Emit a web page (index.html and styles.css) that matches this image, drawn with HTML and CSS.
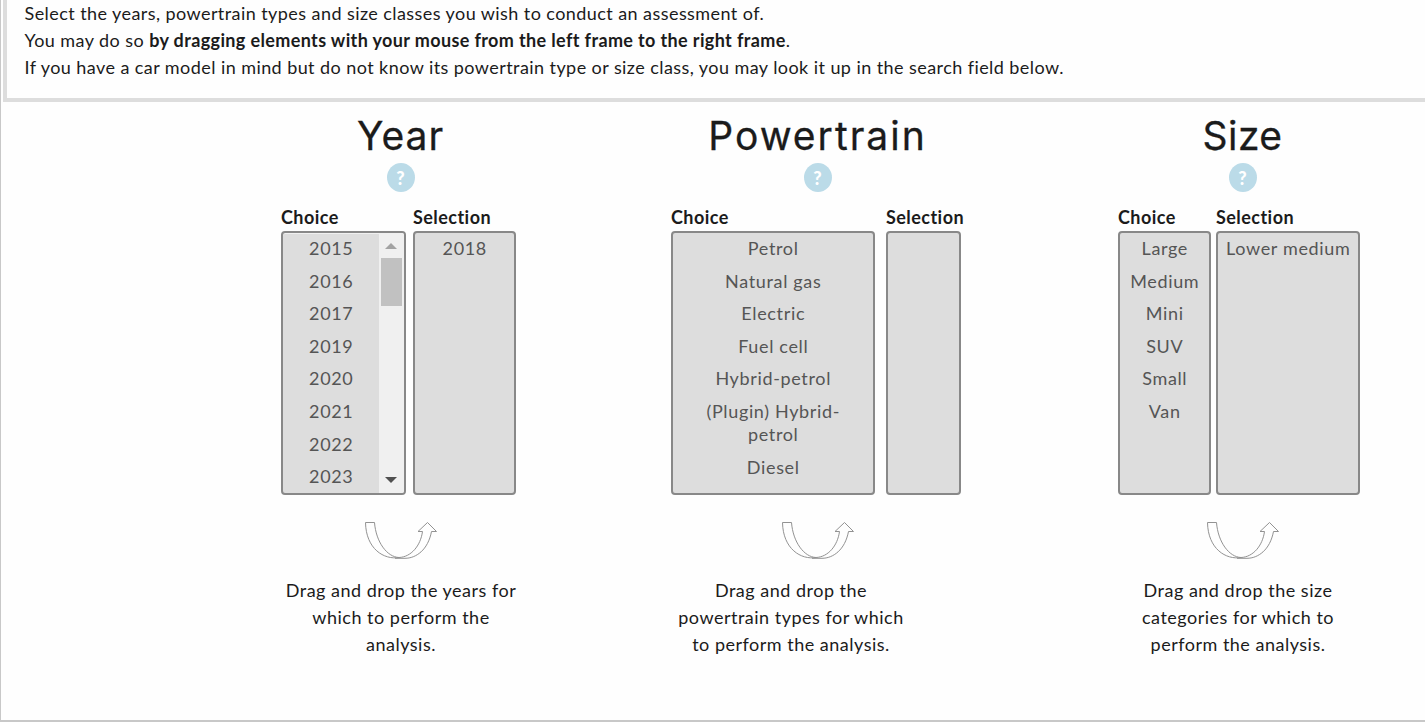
FILE: index.html
```html
<!DOCTYPE html>
<html lang="en">
<head>
<meta charset="utf-8">
<title>Selection</title>
<link rel="stylesheet" href="styles.css">
</head>
<body>
<svg class="defs" width="0" height="0"><defs>
<symbol id="arrow" viewBox="0 0 74 40"><path d="M1.500 3.500H10.500C12 23 23 38 35 38.500C20 41 2 30 1.500 3.500ZM35 38.500C47 38 56.500 27 58.500 12.500H54L63.500 3.500L72.500 12.500H67.500C64 31 52 39.300 41 39.300H31" fill="none" stroke="#929292" stroke-width="1"/></symbol>
</defs></svg>
<main class="page">
<section class="intro">
<p>Select the years, powertrain types and size classes you wish to conduct an assessment of.</p>
<p>You may do so <b>by dragging elements with your mouse from the left frame to the right frame</b>.</p>
<p>If you have a car model in mind but do not know its powertrain type or size class, you may look it up in the search field below.</p>
</section>
<div class="columns">
<section class="column year">
<h2>Year</h2><span class="help">?</span>
<div class="lists">
<div class="choice"><h3>Choice</h3><div class="box scrolling"><ul><li>2015</li><li>2016</li><li>2017</li><li>2019</li><li>2020</li><li>2021</li><li>2022</li><li>2023</li></ul><div class="scrollbar"><i class="up"></i><i class="thumb"></i><i class="down"></i></div></div></div>
<div class="selection"><h3>Selection</h3><div class="box"><ul><li>2018</li></ul></div></div>
</div>
<svg class="arrow"><use href="#arrow"/></svg>
<p class="hint">Drag and drop the years for<br>which to perform the<br>analysis.</p>
</section>
<section class="column powertrain">
<h2>Powertrain</h2><span class="help">?</span>
<div class="lists">
<div class="choice"><h3>Choice</h3><div class="box"><ul><li>Petrol</li><li>Natural gas</li><li>Electric</li><li>Fuel cell</li><li>Hybrid-petrol</li><li>(Plugin) Hybrid-<br>petrol</li><li>Diesel</li></ul></div></div>
<div class="selection"><h3>Selection</h3><div class="box"></div></div>
</div>
<svg class="arrow"><use href="#arrow"/></svg>
<p class="hint">Drag and drop the<br>powertrain types for which<br>to perform the analysis.</p>
</section>
<section class="column size">
<h2>Size</h2><span class="help">?</span>
<div class="lists">
<div class="choice"><h3>Choice</h3><div class="box"><ul><li>Large</li><li>Medium</li><li>Mini</li><li>SUV</li><li>Small</li><li>Van</li></ul></div></div>
<div class="selection"><h3>Selection</h3><div class="box"><ul><li>Lower medium</li></ul></div></div>
</div>
<svg class="arrow"><use href="#arrow"/></svg>
<p class="hint">Drag and drop the size<br>categories for which to<br>perform the analysis.</p>
</section>
</div>
</main>
</body>
</html>
```
FILE: styles.css
```css
* { box-sizing: border-box; }
body { margin: 0; font: 18px/27px Lato, sans-serif; letter-spacing: .5px; color: #1b1b1b; background: #fefefe; overflow: hidden; }
p, h2, h3, ul { margin: 0; padding: 0; }
.defs { position: absolute; }
.page { height: 722px; border-left: 1px solid #c8c8c8; border-bottom: 2px solid #c8c8c8; }
.intro { height: 102px; margin-left: 2px; padding-left: 17.5px; border-left: 4px solid #ddd; border-bottom: 4px solid #ddd; white-space: nowrap; letter-spacing: .43px; }
.intro b { letter-spacing: .37px; }
.columns { display: grid; grid-template-columns: 239px 296px 249px; column-gap: 151px; padding-left: 280px; }
.column { display: flex; flex-direction: column; align-items: center; white-space: nowrap; }
.column.powertrain { padding-right: 3px; }
h2 { font: 400 39px/48px Inter, sans-serif; margin-top: 10px; letter-spacing: 1px; -webkit-text-stroke: .3px #1b1b1b; }
.powertrain h2 { letter-spacing: 2px; }
.size h2 { letter-spacing: .4px; }
.help { width: 28px; height: 29px; margin-top: 3px; border-radius: 50%; background: #bbdbe8; color: #fff; font: 900 18px/31px Lato, sans-serif; text-align: center; letter-spacing: 0; }
.lists { display: flex; align-self: flex-start; margin-top: 12px; }
h3 { font: 700 18px/27px Lato, sans-serif; letter-spacing: .45px; }
.box { height: 264px; border: 2px solid #888; border-radius: 4px; background: #ddd; color: #555; overflow: hidden; }
ul { list-style: none; text-align: center; flex: 1; padding-left: .5px; }
li { padding: 4.8px 0; line-height: 23px; letter-spacing: .65px; }
li:first-child { padding-top: 4.1px; }
.scrolling { display: flex; box-shadow: inset 0 1px #f0f0f0; }
.scrollbar { width: 25px; background: #f0f0f0; display: flex; flex-direction: column; align-items: center; padding: 10px 0; }
.up { margin-right: 1px; border: 6px solid transparent; border-top: 0; border-bottom: 6px solid #a3a3a3; }
.thumb { width: 21px; height: 48px; margin-top: 9px; background: #c1c1c1; }
.down { margin-right: 1px; border: 6px solid transparent; border-bottom: 0; border-top: 6px solid #505050; margin-top: auto; }
.year .choice { width: 125px; margin-right: 7px; }
.year .selection { width: 103px; }
.powertrain .choice { width: 204px; margin-right: 11px; }
.powertrain .selection { width: 75px; }
.size .choice { width: 93px; margin-right: 5px; }
.size .selection { width: 144px; }
.arrow { width: 74px; height: 40px; margin-top: 24px; }
.hint { align-self: flex-start; width: 240px; margin-top: 18px; text-align: center; }
```
